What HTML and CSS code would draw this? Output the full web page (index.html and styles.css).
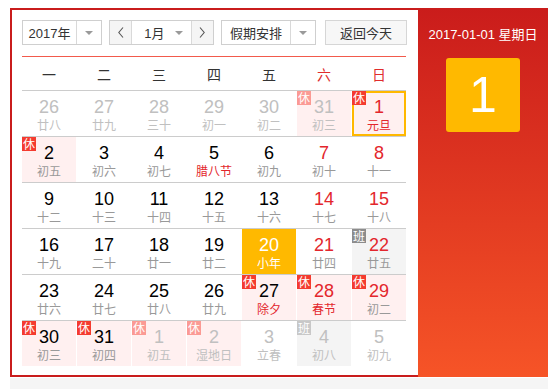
FILE: index.html
```html
<html>
  <head>
    <link rel="stylesheet" href="styles.css">
  </head>
  <body>
    <div class="page">
      <div class="calendar">
        <div class="cal_main">
          <div class="toolbar">
            <div class="select select_year">
              <span class="select_text">2017年</span>
              <span class="select_arrow"><i class="tri"></i></span>
            </div>
            <div class="month_group">
              <a class="month_btn" href="#"><svg width="6" height="11" viewBox="0 0 6 11"><polyline points="5,0.5 0.8,5.5 5,10.5" fill="none" stroke="#555" stroke-width="1.1"/></svg></a>
              <div class="month_select">
                <span>1月</span>
                <i class="tri"></i>
              </div>
              <a class="month_btn" href="#"><svg width="6" height="11" viewBox="0 0 6 11"><polyline points="1,0.5 5.2,5.5 1,10.5" fill="none" stroke="#555" stroke-width="1.1"/></svg></a>
            </div>
            <div class="select select_holiday">
              <span class="select_text">假期安排</span>
              <span class="select_arrow"><i class="tri"></i></span>
            </div>
            <a class="today_btn" href="#">返回今天</a>
          </div><!-- toolbar -->

          <div class="week_head">
            <span>一</span><span>二</span><span>三</span><span>四</span><span>五</span>
            <span class="weekend">六</span><span class="weekend">日</span>
          </div>

          <div class="cal_body"></div>
        </div><!-- cal_main -->

        <div class="cal_side">
          <p class="side_date">2017-01-01 星期日</p>
          <div class="side_day">1</div>
        </div><!-- cal_side -->
      </div><!-- calendar -->
      <div class="cal_foot"></div>
    </div>

    <script>
      // d: day, l: lunar, c: extra classes, b: badge
      var days = [
        [{d:26,l:'廿八',c:'other'},{d:27,l:'廿九',c:'other'},{d:28,l:'三十',c:'other'},{d:29,l:'初一',c:'other'},{d:30,l:'初二',c:'other'},{d:31,l:'初三',c:'other rest',b:'休'},{d:1,l:'元旦',c:'rest selected red fest',b:'休'}],
        [{d:2,l:'初五',c:'rest',b:'休'},{d:3,l:'初六'},{d:4,l:'初七'},{d:5,l:'腊八节',c:'fest'},{d:6,l:'初九'},{d:7,l:'初十',c:'red'},{d:8,l:'十一',c:'red'}],
        [{d:9,l:'十二'},{d:10,l:'十三'},{d:11,l:'十四'},{d:12,l:'十五'},{d:13,l:'十六'},{d:14,l:'十七',c:'red'},{d:15,l:'十八',c:'red'}],
        [{d:16,l:'十九'},{d:17,l:'二十'},{d:18,l:'廿一'},{d:19,l:'廿二'},{d:20,l:'小年',c:'today'},{d:21,l:'廿四',c:'red'},{d:22,l:'廿五',c:'work red',b:'班'}],
        [{d:23,l:'廿六'},{d:24,l:'廿七'},{d:25,l:'廿八'},{d:26,l:'廿九'},{d:27,l:'除夕',c:'rest fest',b:'休'},{d:28,l:'春节',c:'rest red fest',b:'休'},{d:29,l:'初二',c:'rest red',b:'休'}],
        [{d:30,l:'初三',c:'rest',b:'休'},{d:31,l:'初四',c:'rest',b:'休'},{d:1,l:'初五',c:'other rest',b:'休'},{d:2,l:'湿地日',c:'other rest',b:'休'},{d:3,l:'立春',c:'other'},{d:4,l:'初八',c:'other work',b:'班'},{d:5,l:'初九',c:'other'}]
      ];

      var html = '';
      for(var r = 0; r < days.length; r++){
        html += '<div class="cal_row">';
        for(var i = 0; i < days[r].length; i++){
          var day = days[r][i];
          html += '<div class="cell ' + (day.c || '') + '">';
          if(day.b){
            html += '<span class="badge">' + day.b + '</span>';
          }
          html += '<span class="num">' + day.d + '</span>';
          html += '<span class="lunar">' + day.l + '</span>';
          html += '</div>';
        }
        html += '</div>';
      }
      document.querySelector('.cal_body').innerHTML = html;
    </script>
  </body>
</html>
```

FILE: styles.css
```css
body { margin: 0; background: #fff; font-family: "Liberation Sans", "Noto Sans CJK SC", sans-serif; color: #333; }
a { text-decoration: none; color: #333; }

.page { padding: 8px 10px 0; width: 538px; }
.calendar { display: flex; height: 369px; }
.cal_foot { height: 12px; margin-top: 1px; background: #f5f5f5; }

.cal_main { flex: 1; border: 2px solid #c91c1c; border-right: none; padding: 10px 0 0 10px; }

.toolbar { display: flex; height: 25px; }
.select { display: flex; box-sizing: border-box; height: 25px; border: 1px solid #cfcfcf; background: #fff; font-size: 13px; }
.select_text { flex: 1; display: flex; align-items: center; justify-content: center; }
.select_arrow { display: flex; align-items: center; justify-content: center; width: 24px; border-left: 1px solid #d9d9d9; }
.tri { display: block; width: 0; height: 0; border-left: 4px solid transparent; border-right: 4px solid transparent; border-top: 4px solid #9a9a9a; }
.select_year { width: 80px; }
.select_holiday { width: 95px; margin-left: 7px; }

.month_group { display: flex; box-sizing: border-box; width: 105px; height: 25px; margin-left: 7px; border: 1px solid #cfcfcf; }
.month_btn { display: flex; align-items: center; justify-content: center; width: 22px; background: #f5f5f5; }
.month_select { display: flex; align-items: center; width: 60px; border-left: 1px solid #d9d9d9; border-right: 1px solid #d9d9d9; font-size: 13px; }
.month_select span { margin-left: 12px; flex: 1; }
.month_select .tri { margin-right: 8px; }

.today_btn { display: flex; align-items: center; justify-content: center; box-sizing: border-box; width: 82px; height: 25px; margin-left: 9px; border: 1px solid #d6d6d6; background: #f7f7f7; font-size: 13px; }

.week_head { display: flex; gap: 1px; margin-top: 11px; width: 384px; height: 33px; border-top: 1px solid #f25a4c; }
.week_head span { width: 54px; display: flex; align-items: center; justify-content: center; font-size: 14px; color: #333; padding-top: 1px; }
.week_head .weekend { color: #e02c2c; }

.cal_row { display: flex; gap: 1px; width: 384px; border-top: 1px solid #ccc; }
.cell { position: relative; width: 54px; height: 45px; text-align: center; }
.num { display: block; padding-top: 6px; font-size: 18px; line-height: 20px; color: #000; }
.lunar { display: block; font-size: 12px; line-height: 16px; color: #999; font-family: "Noto Sans CJK SC", sans-serif; }

.badge { position: absolute; top: 0; left: 0; width: 14px; height: 14px; font-size: 12px; line-height: 14px; color: #fff; background: #f43b2f; font-family: "Noto Sans CJK SC", sans-serif; }

.rest { background: #fff0f0; }
.work { background: #f4f4f4; }
.work .badge { background: #8c8c8c; }
.red .num { color: #e3262c; }
.fest .lunar { color: #e3262c; }

.other .num, .other .lunar { color: #c0c0c0; }
.other .badge { background: #fb9a94; }
.other.work .badge { background: #c8c8c8; }

.selected { box-shadow: inset 0 0 0 2px #ffb800; }
.today { background: #ffb900; }
.today .num, .today .lunar { color: #fff; }

.cal_side { width: 130px; background: linear-gradient(#ca1c1b, #f65427); text-align: center; color: #fff; }
.side_date { margin: 18px 0 0; font-size: 13px; line-height: 17px; }
.side_day { width: 74px; height: 74px; margin: 15px auto 0; border-radius: 3px; background: #ffb900; font-size: 50px; line-height: 74px; color: #fff; }
```
